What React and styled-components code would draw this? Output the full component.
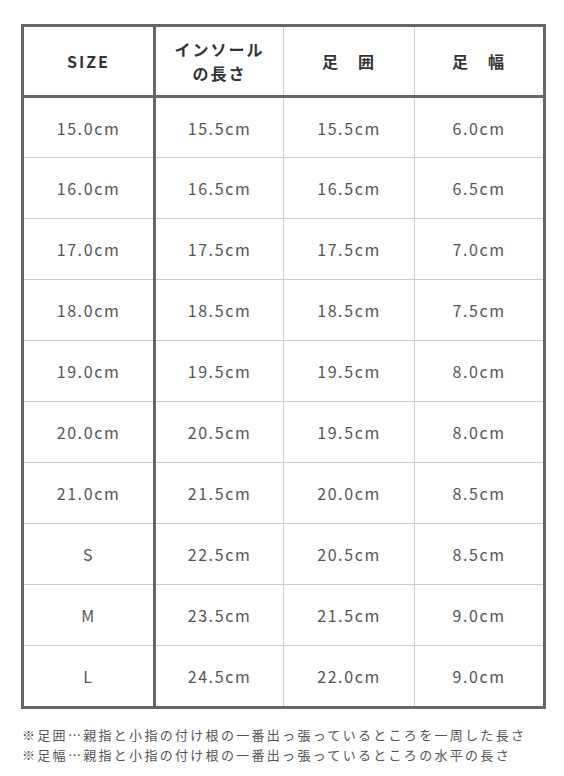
import React from 'react'
import styled, { createGlobalStyle } from 'styled-components'

const GlobalStyle = createGlobalStyle`
  body {
    margin: 0;
    background: #fff;
    font-family: "Noto Sans CJK JP", "Noto Sans", sans-serif;
    color: #333;
  }
`

const rows = [
  ['15.0cm', '15.5cm', '15.5cm', '6.0cm'],
  ['16.0cm', '16.5cm', '16.5cm', '6.5cm'],
  ['17.0cm', '17.5cm', '17.5cm', '7.0cm'],
  ['18.0cm', '18.5cm', '18.5cm', '7.5cm'],
  ['19.0cm', '19.5cm', '19.5cm', '8.0cm'],
  ['20.0cm', '20.5cm', '19.5cm', '8.0cm'],
  ['21.0cm', '21.5cm', '20.0cm', '8.5cm'],
  ['S', '22.5cm', '20.5cm', '8.5cm'],
  ['M', '23.5cm', '21.5cm', '9.0cm'],
  ['L', '24.5cm', '22.0cm', '9.0cm'],
]

const App = () => {
  return (
    <>
      <GlobalStyle />
      <Page>
        <SizeTable>
          <colgroup>
            <col style={{ width: 132 }} />
            <col style={{ width: 129 }} />
            <col style={{ width: 131 }} />
            <col style={{ width: 130 }} />
          </colgroup>
          <thead>
            <tr>
              <Th>SIZE</Th>
              <Th>インソール<br />の長さ</Th>
              <Th>足　囲</Th>
              <Th>足　幅</Th>
            </tr>
          </thead>
          <tbody>
            {rows.map((r, i) => (
              <Row key={i} last={i === rows.length - 1}>
                {r.map((v, j) => <Td key={j}>{v}</Td>)}
              </Row>
            ))}
          </tbody>
        </SizeTable>
        <Notes>
          <p>※足囲…親指と小指の付け根の一番出っ張っているところを一周した長さ</p>
          <p>※足幅…親指と小指の付け根の一番出っ張っているところの水平の長さ</p>
        </Notes>
      </Page>
    </>
  )
}

const Page = styled.div`
  padding: 24px 0 0 21px;
`

const SizeTable = styled.table`
  border-collapse: collapse;
  table-layout: fixed;
  border: 3px solid #666;
  width: 525px;

  th:first-child, td:first-child {
    border-right: 3px solid #666;
  }
`

const Th = styled.th`
  height: 68px;
  padding: 0;
  border: 1px solid #ccc;
  border-bottom: 3px solid #666;
  font-size: 16px;
  font-weight: 700;
  line-height: 24px;
  letter-spacing: 2px;
  color: #333;
  text-align: center;
  vertical-align: middle;
`

const Row = styled.tr`
  height: ${p => (p.last ? 62 : 61)}px;
`

const Td = styled.td`
  padding: 0;
  border: 1px solid #ccc;
  font-size: 16px;
  letter-spacing: 1.6px;
  color: #555;
  text-align: center;
  vertical-align: middle;
`

const Notes = styled.div`
  margin-top: 16px;
  padding-left: 1px;
  font-size: 13px;
  line-height: 20px;
  letter-spacing: 2.3px;
  color: #555;

  p {
    margin: 0;
    white-space: nowrap;
  }
`

export default App
